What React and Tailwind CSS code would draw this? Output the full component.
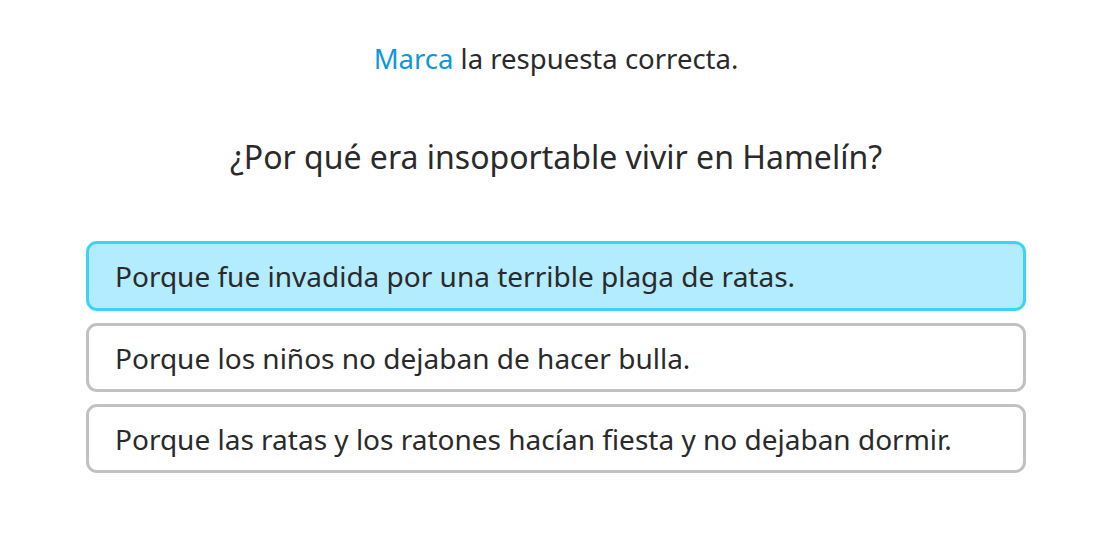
const options = [
  { text: "Porque fue invadida por una terrible plaga de ratas.", selected: true },
  { text: "Porque los niños no dejaban de hacer bulla.", selected: false },
  { text: "Porque las ratas y los ratones hacían fiesta y no dejaban dormir.", selected: false },
];

export default function App() {
  return (
    <div
      className="w-[1107px] h-[550px] bg-white pl-[5px] flex flex-col items-center text-[#2a2a2a]"
      style={{ fontFamily: '"Noto Sans", "Open Sans", sans-serif' }}
    >
      {/* Instruction */}
      <p className="mt-[40px] text-[27.5px] leading-[38px]">
        <span className="text-[#0b98de]">Marca</span> la respuesta correcta.
      </p>

      {/* Question */}
      <h2 className="mt-[57px] text-[32px] leading-[44px]">
        ¿Por qué era insoportable vivir en Hamelín?
      </h2>

      {/* Options */}
      <div className="mt-[62px] w-[940px] flex flex-col gap-[12px]">
        {options.map((opt) => (
          <button
            key={opt.text}
            className={
              opt.selected
                ? "h-[70px] rounded-[11px] border-[3px] border-[#3cd4f6] bg-[#b3ecfe] text-left pl-[26px] text-[28px]"
                : "h-[69px] rounded-[11px] border-[3px] border-[#c1c1c1] bg-white text-left pl-[26px] text-[28px]"
            }
          >
            {opt.text}
          </button>
        ))}
      </div>
    </div>
  );
}
